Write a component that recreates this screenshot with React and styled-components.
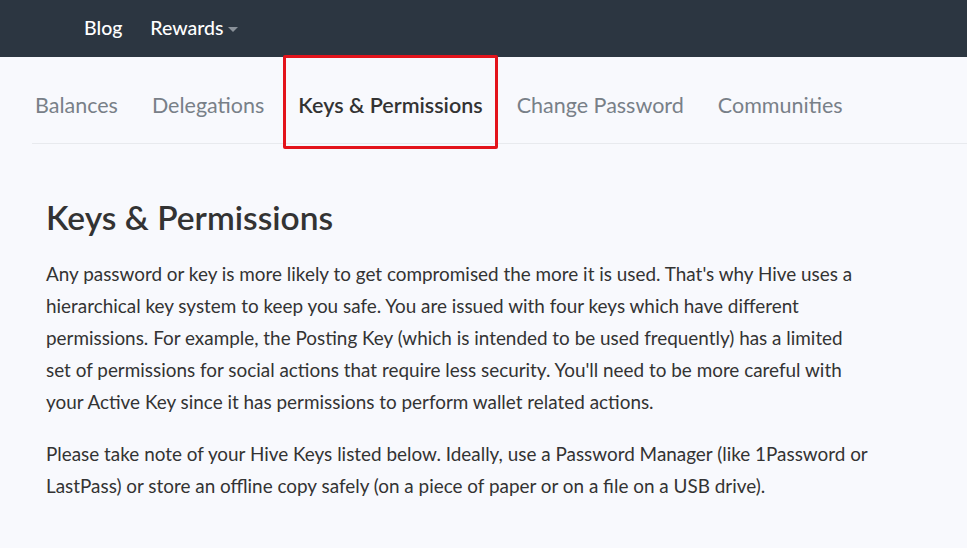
import styled, { createGlobalStyle } from 'styled-components';

const GlobalStyle = createGlobalStyle`
  html, body {
    margin: 0;
    padding: 0;
    background: #f8f9fd;
  }
  body {
    font-family: Lato, "Open Sans", sans-serif;
    color: #333;
  }
`;

const Header = styled.header`
  height: 57px;
  background: #2c3641;
  display: flex;
  align-items: center;
  gap: 28px;
  padding-left: 84px;
`;

const NavLink = styled.a`
  color: #fff;
  font-size: 19.5px;
  font-weight: 500;
  text-decoration: none;
  display: flex;
  align-items: center;
  gap: 5px;
  padding-bottom: 2px;
`;

const Caret = styled.span`
  width: 0;
  height: 0;
  border-left: 5px solid transparent;
  border-right: 5px solid transparent;
  border-top: 5px solid #8a9199;
  margin-top: 4px;
`;

const Page = styled.main`
  padding-left: 32px;
`;

const Tabs = styled.nav`
  display: flex;
  gap: 34px;
  padding-left: 3px;
  border-bottom: 1px solid #e8eaee;
  height: 86px;
`;

const Tab = styled.a`
  position: relative;
  font-size: 21.5px;
  line-height: 34px;
  padding-top: 31px;
  color: ${(p) => (p.$active ? '#333' : '#788088')};
  font-weight: ${(p) => (p.$active ? 600 : 400)};
  white-space: nowrap;

  ${(p) =>
    p.$active &&
    `
    &::after {
      content: '';
      position: absolute;
      top: -2px;
      bottom: -6px;
      left: -15px;
      right: -15px;
      border: 3px solid #e3131b;
      border-radius: 2px;
    }
  `}
`;

const Content = styled.section`
  padding: 54px 0 0 14px;
  max-width: 823px;
`;

const Title = styled.h1`
  margin: 0 0 22px;
  font-size: 33.5px;
  line-height: 38px;
  font-weight: 600;
  color: #333;
`;

const Paragraph = styled.p`
  margin: 0 0 20px;
  font-size: 18.9px;
  line-height: 32px;
  color: #333;
`;

const tabs = ['Balances', 'Delegations', 'Keys & Permissions', 'Change Password', 'Communities'];

export default function App() {
  return (
    <>
      <GlobalStyle />
      <Header>
        <NavLink href="#">Blog</NavLink>
        <NavLink href="#">
          Rewards <Caret />
        </NavLink>
      </Header>
      <Page>
        <Tabs>
          {tabs.map((t) => (
            <Tab key={t} $active={t === 'Keys & Permissions'}>
              {t}
            </Tab>
          ))}
        </Tabs>
        <Content>
          <Title>Keys &amp; Permissions</Title>
          <Paragraph>
            Any password or key is more likely to get compromised the more it is used. That's why Hive
            uses a hierarchical key system to keep you safe. You are issued with four keys which have
            different permissions. For example, the Posting Key (which is intended to be used
            frequently) has a limited set of permissions for social actions that require less
            security. You'll need to be more careful with your Active Key since it has permissions to
            perform wallet related actions.
          </Paragraph>
          <Paragraph>
            Please take note of your Hive Keys listed below. Ideally, use a Password Manager (like
            1Password or LastPass) or store an offline copy safely (on a piece of paper or on a file on
            a USB drive).
          </Paragraph>
        </Content>
      </Page>
    </>
  );
}
